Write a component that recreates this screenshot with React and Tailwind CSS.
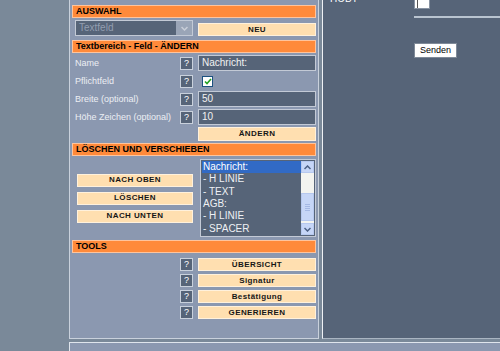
import React from "react";

const F = { fontFamily: '"Liberation Sans", Arial, sans-serif' };

function Header({ children, className = "" }) {
  return (
    <div className={"h-[13px] bg-[#ff8a3a] border border-[#ffc49c] flex items-center pl-[3px] text-[9px] font-bold text-black leading-none " + className}>
      {children}
    </div>
  );
}

function Btn({ children, className = "" }) {
  return (
    <div className={"h-[13px] bg-[#ffdfb0] border border-[#fff1dc] flex items-center justify-center text-[8px] font-bold text-[#161616] tracking-[0.4px] leading-none " + className}>
      {children}
    </div>
  );
}

function Q() {
  return (
    <div className="w-[13px] h-[13px] bg-[#566478] border border-[#c9d1dc] flex items-center justify-center text-[9px] text-white leading-none">?</div>
  );
}

function Input({ value }) {
  return (
    <div className="w-[118px] h-[16px] bg-[#566478] border border-[#c3cad6] flex items-center pl-[3px] text-[10px] text-[#f2f2f2] leading-none">
      {value}
    </div>
  );
}

function FieldRow({ label, children, className = "" }) {
  return (
    <div className={"flex h-[16px] items-center " + className}>
      <div className="flex-1 flex items-center pl-[3px] pr-[5px]">
        <span className="flex-1 text-[9px] text-[#eceff4] leading-none">{label}</span>
        <Q />
      </div>
      <div className="w-[118px] flex items-center">{children}</div>
    </div>
  );
}

function Chevron({ up, color = "#4d6185" }) {
  return (
    <svg width="7" height="5" viewBox="0 0 7 5">
      <path d={up ? "M0.5 4 L3.5 1 L6.5 4" : "M0.5 1 L3.5 4 L6.5 1"} fill="none" stroke={color} strokeWidth="1.5" />
    </svg>
  );
}

export default function App() {
  const items = ["Nachricht:", "- H LINIE", "- TEXT", "AGB:", "- H LINIE", "- SPACER"];
  return (
    <div className="w-[500px] h-[351px] overflow-hidden bg-[#7a8999] flex" style={F}>
      <div className="w-[69px] shrink-0" />
      <div className="flex-1 flex flex-col">
        <div className="flex h-[339px] gap-[3px]">
          {/* center panel */}
          <div className="w-[250px] bg-[#8b98b0] border-l border-r border-b border-[#c9d1dc] pl-[2px] pr-[2px] pt-[5px] flex flex-col">
            <Header>AUSWAHL</Header>
            <div className="flex mt-[2px] h-[16px]">
              <div className="flex-1 pl-[3px] pr-[5px]">
                <div className="h-[16px] border border-[#c3cad6] flex">
                  <div className="flex-1 bg-[#566478] flex items-center pl-[3px] text-[10px] text-[#939eb0] leading-none">Textfeld</div>
                  <div className="w-[16px] bg-[#9aa5b7] flex items-center justify-center">
                    <Chevron color="#c9ced8" />
                  </div>
                </div>
              </div>
              <div className="w-[118px] pt-[3px]">
                <Btn>NEU</Btn>
              </div>
            </div>
            <Header className="mt-[4px]">Textbereich - Feld - ÄNDERN</Header>
            <FieldRow label="Name" className="mt-[2px]">
              <Input value="Nachricht:" />
            </FieldRow>
            <FieldRow label="Pflichtfeld" className="mt-[2px]">
              <div className="ml-[4px] w-[11px] h-[11px] bg-white border border-[#1c5180] flex items-center justify-center">
                <svg width="8" height="7" viewBox="0 0 8 7">
                  <path d="M1 3.5 L3 5.5 L7 1" fill="none" stroke="#21a121" strokeWidth="1.6" />
                </svg>
              </div>
            </FieldRow>
            <FieldRow label="Breite (optional)" className="mt-[2px]">
              <Input value="50" />
            </FieldRow>
            <FieldRow label="Höhe Zeichen (optional)" className="mt-[2px]">
              <Input value="10" />
            </FieldRow>
            <div className="flex mt-[2px]">
              <div className="flex-1" />
              <Btn className="w-[118px] h-[14px]">ÄNDERN</Btn>
            </div>
            <Header className="mt-[2px]">LÖSCHEN UND VERSCHIEBEN</Header>
            <div className="flex mt-[3px] h-[78px]">
              <div className="flex-1 flex flex-col justify-center gap-[5px] pl-[5px] pr-[5px]">
                <Btn>NACH OBEN</Btn>
                <Btn>LÖSCHEN</Btn>
                <Btn>NACH UNTEN</Btn>
              </div>
              <div className="w-[118px] pl-[2px]">
                <div className="h-[78px] border border-[#c3cad6] bg-[#566478] flex p-[1px]">
                  <div className="flex-1 flex flex-col">
                    {items.map((t, i) => (
                      <div key={i} className={"h-[12.4px] flex items-center pl-[1px] text-[10px] leading-none text-[#eef0f4] " + (i === 0 ? "bg-[#316ac5] text-white" : "")}>
                        {t}
                      </div>
                    ))}
                  </div>
                  <div className="w-[13px] bg-[#f3f4f0] flex flex-col">
                    <div className="h-[12px] bg-[#c6d6f7] border border-[#b6c8ee] flex items-center justify-center">
                      <Chevron up />
                    </div>
                    <div className="h-[20px]" />
                    <div className="h-[28px] bg-[#c6d6f7] border border-[#b6c8ee] flex flex-col items-center justify-center gap-[1px]">
                      <div className="w-[5px] h-px bg-[#a4b8e4]" />
                      <div className="w-[5px] h-px bg-[#a4b8e4]" />
                      <div className="w-[5px] h-px bg-[#a4b8e4]" />
                      <div className="w-[5px] h-px bg-[#a4b8e4]" />
                    </div>
                    <div className="flex-1" />
                    <div className="h-[12px] bg-[#c6d6f7] border border-[#b6c8ee] flex items-center justify-center">
                      <Chevron />
                    </div>
                  </div>
                </div>
              </div>
            </div>
            <Header className="mt-[3px]">TOOLS</Header>
            <div className="flex flex-col gap-[3px] mt-[5px]">
              {["ÜBERSICHT", "Signatur", "Bestätigung", "GENERIEREN"].map((t) => (
                <div key={t} className="flex items-center h-[13px]">
                  <div className="flex-1 flex justify-end pr-[5px]">
                    <Q />
                  </div>
                  <Btn className="w-[118px]">{t}</Btn>
                </div>
              ))}
            </div>
          </div>
          {/* right panel */}
          <div className="flex-1 bg-[#566478] border-l border-b border-l-[#eef1f5] border-b-[#aab5c2] flex flex-col pl-[7px]">
            <div className="flex h-[10px]">
              <div className="w-[84px] -mt-[6px] text-[10px] text-white leading-none h-[11px]">HOBT</div>
              <div className="w-[16px] h-[10px] -mt-[1px] bg-white border border-[#8893a3] flex">
                <div className="ml-[2px] w-px h-full bg-[#555]" />
              </div>
            </div>
            <div className="mt-[6px] ml-[84px] h-[2px] bg-[#b9c4d0]" />
            <div className="mt-[25px] ml-[84px] w-[43px] h-[15px] bg-white border border-[#7f8a98] flex items-center justify-center text-[9px] text-black leading-none">
              Senden
            </div>
          </div>
        </div>
        <div className="h-[3px]" />
        <div className="flex-1 bg-[#8b98b0] border-l border-t border-[#dfe5ec]" />
      </div>
    </div>
  );
}
